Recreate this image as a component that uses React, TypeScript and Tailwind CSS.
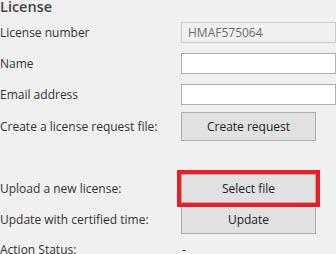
export default function App() {
  const label = "w-[181px] shrink-0 text-[12px] text-[#333]";
  const btn =
    "w-[135px] h-[29px] border border-[#adadad] bg-[#e1e1e1] text-[12px] text-[#222] flex items-center justify-center";
  return (
    <div className="w-[336px] h-[254px] overflow-hidden bg-[#f0f0f0] font-['Open_Sans',sans-serif] relative">
      <div className="text-[14.5px] font-semibold text-[#444] leading-[14px] pt-[0px]">License</div>

      <div className="flex items-center mt-[8px] h-[21px]">
        <div className={label}>License number</div>
        <div className="flex-1 h-[21px] border border-[#cacaca] bg-[#f0f0f0] text-[12px] text-[#6d6d6d] px-[6px] flex items-center">
          HMAF575064
        </div>
      </div>

      <div className="flex items-center mt-[10px] h-[21px]">
        <div className={label}>Name</div>
        <div className="flex-1 h-[21px] border border-[#adadad] bg-white" />
      </div>

      <div className="flex items-center mt-[10px] h-[21px]">
        <div className={label}>Email address</div>
        <div className="flex-1 h-[21px] border border-[#adadad] bg-white" />
      </div>

      <div className="flex items-center mt-[7px] h-[29px]">
        <div className={label}>Create a license request file:</div>
        <div className={btn}>Create request</div>
      </div>

      <div className="flex items-center mt-[33px] h-[29px]">
        <div className={label}>Upload a new license:</div>
        <div className="relative">
          <div className={btn}>Select file</div>
          <div className="absolute -inset-[4px] border-[4px] border-[#ee1c25]" />
        </div>
      </div>

      <div className="flex items-center mt-[2px] h-[29px]">
        <div className={label}>Update with certified time:</div>
        <div className={btn}>Update</div>
      </div>

      <div className="flex items-center mt-[4px] h-[24px]">
        <div className={label}>Action Status:</div>
        <div className="text-[12px] text-[#333] pl-[1px]">-</div>
      </div>
    </div>
  );
}
